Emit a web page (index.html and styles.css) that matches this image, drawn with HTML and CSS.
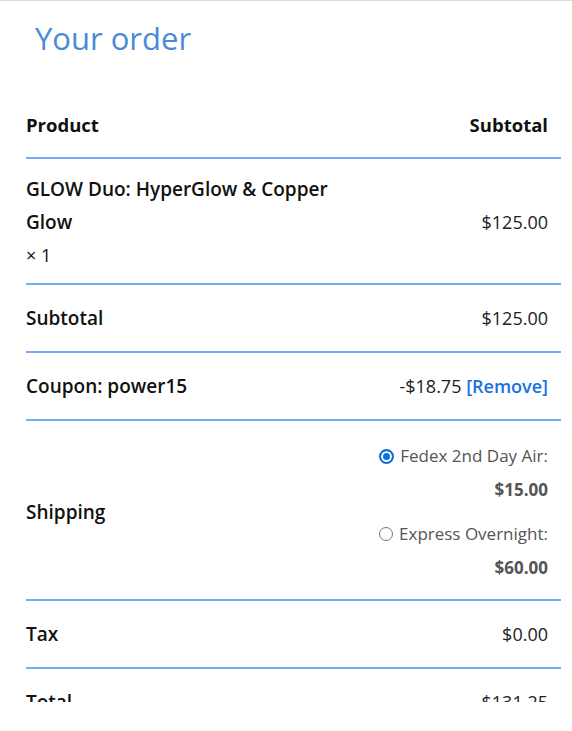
FILE: index.html
```html
<!DOCTYPE html>
<html lang="en">
<head>
<meta charset="utf-8">
<title>Your order</title>
<link rel="stylesheet" href="styles.css">
</head>
<body>
<div class="panel">
  <h2 class="title">Your order</h2>
  <div class="order">
    <div class="row head">
      <span class="label">Product</span>
      <span class="label">Subtotal</span>
    </div>
    <div class="row product">
      <div class="product-name">GLOW Duo: HyperGlow &amp; Copper Glow<br><span class="qty">× 1</span></div>
      <span class="amount">$125.00</span>
    </div>
    <div class="row">
      <span class="label">Subtotal</span>
      <span class="amount">$125.00</span>
    </div>
    <div class="row">
      <span class="label">Coupon: power15</span>
      <span class="amount">-$18.75 <a class="remove" href="#">[Remove]</a></span>
    </div>
    <div class="row shipping">
      <span class="label">Shipping</span>
      <ul class="methods">
        <li class="method">
          <label class="method-label"><span class="radio checked"></span>Fedex 2nd Day Air:</label>
          <span class="price">$15.00</span>
        </li>
        <li class="method">
          <label class="method-label"><span class="radio"></span>Express Overnight:</label>
          <span class="price">$60.00</span>
        </li>
      </ul>
    </div>
    <div class="row">
      <span class="label">Tax</span>
      <span class="amount">$0.00</span>
    </div>
    <div class="row">
      <span class="label">Total</span>
      <span class="amount">$131.25</span>
    </div>
  </div>
</div>
</body>
</html>
```
FILE: styles.css
```css
html, body {
  margin: 0;
  padding: 0;
  background: #fff;
}
body {
  font-family: "Open Sans", "Noto Sans", "Liberation Sans", sans-serif;
  color: #1a1a1a;
}
.panel {
  border-top: 1px solid #dcdcdc;
  height: 701px;
  overflow: hidden;
  padding: 0 11px 0 26px;
}
.title {
  margin: 18px 0 51px 9px;
  font-size: 31px;
  line-height: 38px;
  font-weight: 400;
  color: #4a8ad8;
}
.order {
  font-size: 18px;
  line-height: 33px;
}
.row {
  display: flex;
  justify-content: space-between;
  align-items: center;
  padding: 17px 13px 16px 0;
  border-bottom: 2px solid #7aaaf5;
}
.row.head {
  padding: 0 13px 16px 0;
}
.row.product {
  padding: 14px 13px 11px 0;
}
.label {
  font-size: 19px;
  font-weight: 600;
  color: #111;
}
.head .label {
  font-size: 18.5px;
  font-weight: 700;
}
.product-name {
  width: 330px;
  font-size: 19px;
  font-weight: 600;
  color: #111;
}
.qty {
  font-size: 18px;
  font-weight: 400;
}
.amount {
  color: #222;
}
.remove {
  color: #1a6fe6;
  font-weight: 600;
  text-decoration: none;
}
.row.shipping {
  padding: 18px 13px 14px 0;
}
.methods {
  list-style: none;
  margin: 0;
  padding: 0;
  display: flex;
  flex-direction: column;
  align-items: flex-end;
  gap: 10px;
  font-size: 17px;
  line-height: 34px;
  color: #555;
}
.method {
  display: flex;
  flex-direction: column;
  align-items: flex-end;
}
.method-label {
  display: flex;
  align-items: center;
  gap: 6px;
}
.price {
  font-weight: 700;
}
.radio {
  width: 14px;
  height: 14px;
  border: 1px solid #777;
  border-radius: 50%;
  box-sizing: border-box;
  background: #fff;
}
.radio.checked {
  border: 2px solid #1170d8;
  box-shadow: inset 0 0 0 2px #fff;
  background: #1170d8;
  width: 15px;
  height: 15px;
}
```
